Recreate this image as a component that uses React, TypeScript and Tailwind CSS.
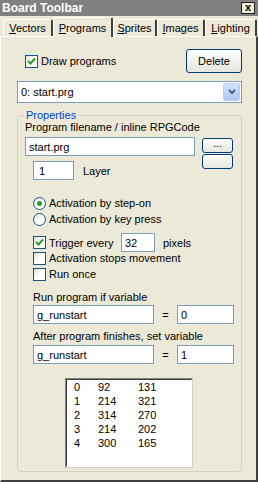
import React from "react";

const font = "font-['Liberation_Sans',Arial,sans-serif]";

function Check({ checked }: { checked?: boolean }) {
  return (
    <span className="w-[13px] h-[13px] border border-[#1C5180] bg-gradient-to-br from-[#DCDCD7] via-white to-white flex items-center justify-center shrink-0">
      {checked && (
        <svg width="9" height="9" viewBox="0 0 9 9">
          <path d="M1 4 L3.5 6.5 L8 1.5" stroke="#21A121" strokeWidth="2" fill="none" />
        </svg>
      )}
    </span>
  );
}

function Radio({ checked }: { checked?: boolean }) {
  return (
    <span className="w-[13px] h-[13px] rounded-full border border-[#1C5180] bg-gradient-to-br from-[#DCDCD7] via-white to-white flex items-center justify-center shrink-0">
      {checked && <span className="w-[5px] h-[5px] rounded-full bg-[#21A121]" />}
    </span>
  );
}

function Btn({ className, children }: { className?: string; children?: React.ReactNode }) {
  return (
    <div
      className={
        "border border-[#003C74] rounded-[3px] bg-gradient-to-b from-white to-[#E6E5DE] flex items-center justify-center text-black shrink-0 " +
        (className ?? "")
      }
    >
      {children}
    </div>
  );
}

function Field({ className, value }: { className?: string; value: string }) {
  return (
    <div className={"border border-[#7F9DB9] bg-white flex items-center pl-[3px] text-black shrink-0 " + (className ?? "")}>
      {value}
    </div>
  );
}

const tabs = [
  { k: "V", r: "ectors", w: "w-[50px]" },
  { k: "P", r: "rograms", w: "w-[60px]", sel: true },
  { k: "S", r: "prites", w: "w-[44px]" },
  { k: "I", r: "mages", w: "w-[48px]" },
  { k: "L", r: "ighting", w: "w-[52px]" },
];

const rows = [
  ["0", "92", "131"],
  ["1", "214", "321"],
  ["2", "314", "270"],
  ["3", "214", "202"],
  ["4", "300", "165"],
];

export default function App() {
  return (
    <div className={"w-[258px] h-[482px] bg-[#ECE9D8] flex flex-col text-[11px] leading-[14px] text-black overflow-hidden whitespace-nowrap " + font}>
      {/* title bar */}
      <div className="h-[16px] bg-[#808080] flex items-center justify-between pl-[2px] pr-[3px] shrink-0">
        <span className="text-white font-bold text-[12px]">Board Toolbar</span>
        <div className="w-[14px] h-[12px] bg-[#ECE9D8] border border-[#202020] flex items-center justify-center">
          <span className="font-bold text-[11px] leading-none -mt-[2px]">x</span>
        </div>
      </div>

      {/* tabs */}
      <div className="h-[20px] flex items-end pl-[3px] shrink-0">
        {tabs.map((t) => (
          <div
            key={t.k}
            className={
              "flex items-center justify-center border-l border-t border-r-2 border-l-white border-t-white border-r-[#404040] rounded-t-[2px] bg-[#ECE9D8] " +
              t.w +
              (t.sel ? " h-[20px] relative z-10 -mb-[1px]" : " h-[17px]")
            }
          >
            <span>
              <span className="underline">{t.k}</span>
              {t.r}
            </span>
          </div>
        ))}
      </div>

      {/* panel */}
      <div className="flex-1 border-l border-t border-r-2 border-b-2 border-l-white border-t-white border-r-[#404040] border-b-[#404040] pl-[16px] pr-[14px] flex flex-col">
        <div className="flex items-center justify-between pl-[8px] mt-[12px]">
          <div className="flex items-center gap-[3px]">
            <Check checked />
            <span>Draw programs</span>
          </div>
          <Btn className="w-[56px] h-[24px]">Delete</Btn>
        </div>

        <div className="mt-[8px] h-[22px] border border-[#7F9DB9] bg-white flex items-center justify-between pl-[3px] pr-[1px]">
          <span>0: start.prg</span>
          <div className="w-[17px] h-[18px] bg-gradient-to-b from-[#D4E1FF] to-[#B2C7F5] border border-[#BBCCF1] rounded-[2px] flex items-center justify-center">
            <svg width="8" height="6" viewBox="0 0 8 6">
              <path d="M1 1 L4 4 L7 1" stroke="#4D6185" strokeWidth="2" fill="none" />
            </svg>
          </div>
        </div>

        {/* group box */}
        <div className="relative mt-[12px] border border-[#D0D0BF] rounded-[4px] pl-[7px] pt-[4px] pb-[3px] flex flex-col">
          <span className="absolute -top-[7px] left-[6px] px-[2px] bg-[#ECE9D8] text-[#0046D5] leading-[12px]">Properties</span>
          <span>Program filename / inline RPGCode</span>
          <div className="flex items-start mt-[3px] gap-[7px]">
            <div className="flex flex-col">
              <Field className="w-[170px] h-[19px]" value="start.prg" />
              <div className="flex items-center gap-[9px] pl-[8px] mt-[5px]">
                <Field className="w-[41px] h-[19px] pl-[5px]" value="1" />
                <span>Layer</span>
              </div>
            </div>
            <div className="flex flex-col mt-[1px]">
              <Btn className="w-[31px] h-[15px] leading-none">
                <span className="-mt-[4px]">...</span>
              </Btn>
              <Btn className="w-[31px] h-[15px] mt-[1px]" />
            </div>
          </div>

          <div className="flex flex-col pl-[8px] mt-[15px]">
            <div className="flex items-center gap-[3px] h-[16px]">
              <Radio checked />
              <span>Activation by step-on</span>
            </div>
            <div className="flex items-center gap-[3px] h-[16px]">
              <Radio />
              <span>Activation by key press</span>
            </div>
          </div>

          <div className="flex flex-col pl-[8px] mt-[6px]">
            <div className="flex items-center h-[19px]">
              <Check checked />
              <span className="w-[75px] pl-[3px]">Trigger every</span>
              <Field className="w-[34px] h-[19px]" value="32" />
              <span className="ml-[8px]">pixels</span>
            </div>
            <div className="flex items-center gap-[3px] -mt-[2px] h-[16px]">
              <Check />
              <span>Activation stops movement</span>
            </div>
            <div className="flex items-center gap-[3px] h-[16px]">
              <Check />
              <span>Run once</span>
            </div>
          </div>

          <div className="flex flex-col pl-[8px] mt-[8px]">
            <span>Run program if variable</span>
            <div className="flex items-center mt-[1px]">
              <Field className="w-[121px] h-[19px]" value="g_runstart" />
              <span className="w-[23px] text-center">=</span>
              <Field className="w-[57px] h-[19px]" value="0" />
            </div>
            <span className="mt-[5px]">After program finishes, set variable</span>
            <div className="flex items-center mt-[2px]">
              <Field className="w-[121px] h-[19px]" value="g_runstart" />
              <span className="w-[23px] text-center">=</span>
              <Field className="w-[57px] h-[19px]" value="1" />
            </div>
          </div>

          <div className="mt-[14px] ml-[40px] w-[128px] h-[90px] bg-white border border-t-[#808080] border-l-[#808080] border-r-[#D4D0C8] border-b-[#D4D0C8]">
            <div className="w-full h-full border border-t-[#404040] border-l-[#404040] border-r-white border-b-white pl-[7px] leading-[14px]">
              {rows.map((r) => (
                <div key={r[0]} className="flex">
                  <span className="w-[24px]">{r[0]}</span>
                  <span className="w-[40px]">{r[1]}</span>
                  <span>{r[2]}</span>
                </div>
              ))}
            </div>
          </div>
        </div>
      </div>
    </div>
  );
}
